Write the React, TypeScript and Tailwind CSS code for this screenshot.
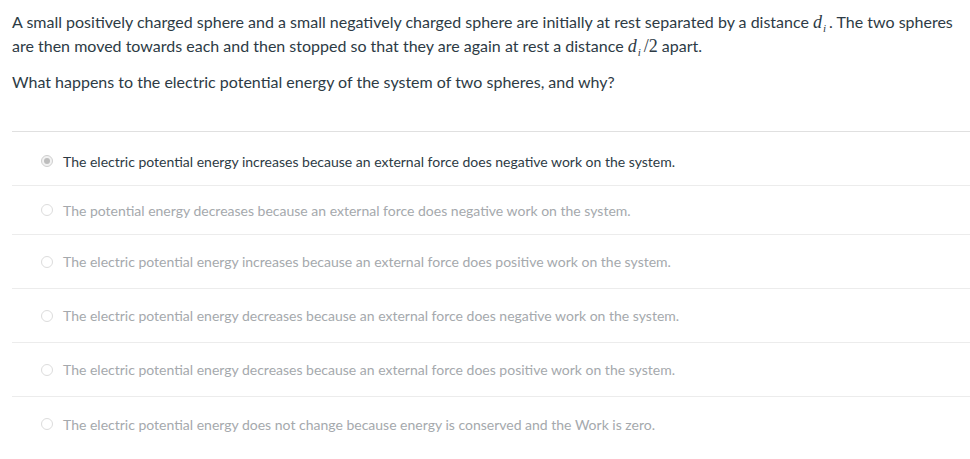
import React from "react";

const answers = [
  { text: "The electric potential energy increases because an external force does negative work on the system.", selected: true, h: "h-[54px] pt-[5px]" },
  { text: "The potential energy decreases because an external force does negative work on the system.", selected: false, h: "h-[49px]" },
  { text: "The electric potential energy increases because an external force does positive work on the system.", selected: false, h: "h-[54px]" },
  { text: "The electric potential energy decreases because an external force does negative work on the system.", selected: false, h: "h-[54px]" },
  { text: "The electric potential energy decreases because an external force does positive work on the system.", selected: false, h: "h-[54px]" },
  { text: "The electric potential energy does not change because energy is conserved and the Work is zero.", selected: false, h: "h-[54px]" },
];

function Di() {
  return (
    <span className="font-['Liberation_Serif',serif] italic text-[18px] leading-[10px] mr-[3px]">
      d<span className="text-[11px] relative top-[4px] ml-[1px]">i</span>
    </span>
  );
}

export default function App() {
  return (
    <div className="w-[970px] h-[459px] bg-white font-['Lato',sans-serif] text-[#2d3b45] overflow-hidden">
      <div className="pl-[12px] pt-[10px] pr-[10px]">
        <p className="text-[16px] leading-[24px]">
          A small positively charged sphere and a small negatively charged sphere are initially at rest separated by a distance <Di />. The two spheres are then moved towards each and then stopped so that they are again at rest a distance <Di /><span className="font-['Liberation_Serif',serif] text-[18px] leading-[10px] mr-[4px]">/2</span>apart.
        </p>
        <p className="text-[16px] leading-[24px] mt-[12px]">What happens to the electric potential energy of the system of two spheres, and why?</p>
      </div>
      <div className="ml-[12px] mt-[37px] border-t border-[#e0e0e0]">
        {answers.map((a, i) => (
          <div
            key={i}
            className={`flex items-center ${a.h} ${i < answers.length - 1 ? "border-b border-[#ececec]" : ""} pl-[29px]`}
          >
            {a.selected ? (
              <span className="w-[12px] h-[12px] rounded-full border border-[#cfcfcf] bg-[#f2f2f2] flex items-center justify-center">
                <span className="w-[6px] h-[6px] rounded-full bg-[#bdbdbd]" />
              </span>
            ) : (
              <span className="w-[12px] h-[12px] rounded-full border border-[#dcdcdc] bg-white" />
            )}
            <span className={`ml-[10px] text-[14px] ${a.selected ? "text-[#2d3b45]" : "text-[#a5a9ad]"}`}>{a.text}</span>
          </div>
        ))}
      </div>
    </div>
  );
}
